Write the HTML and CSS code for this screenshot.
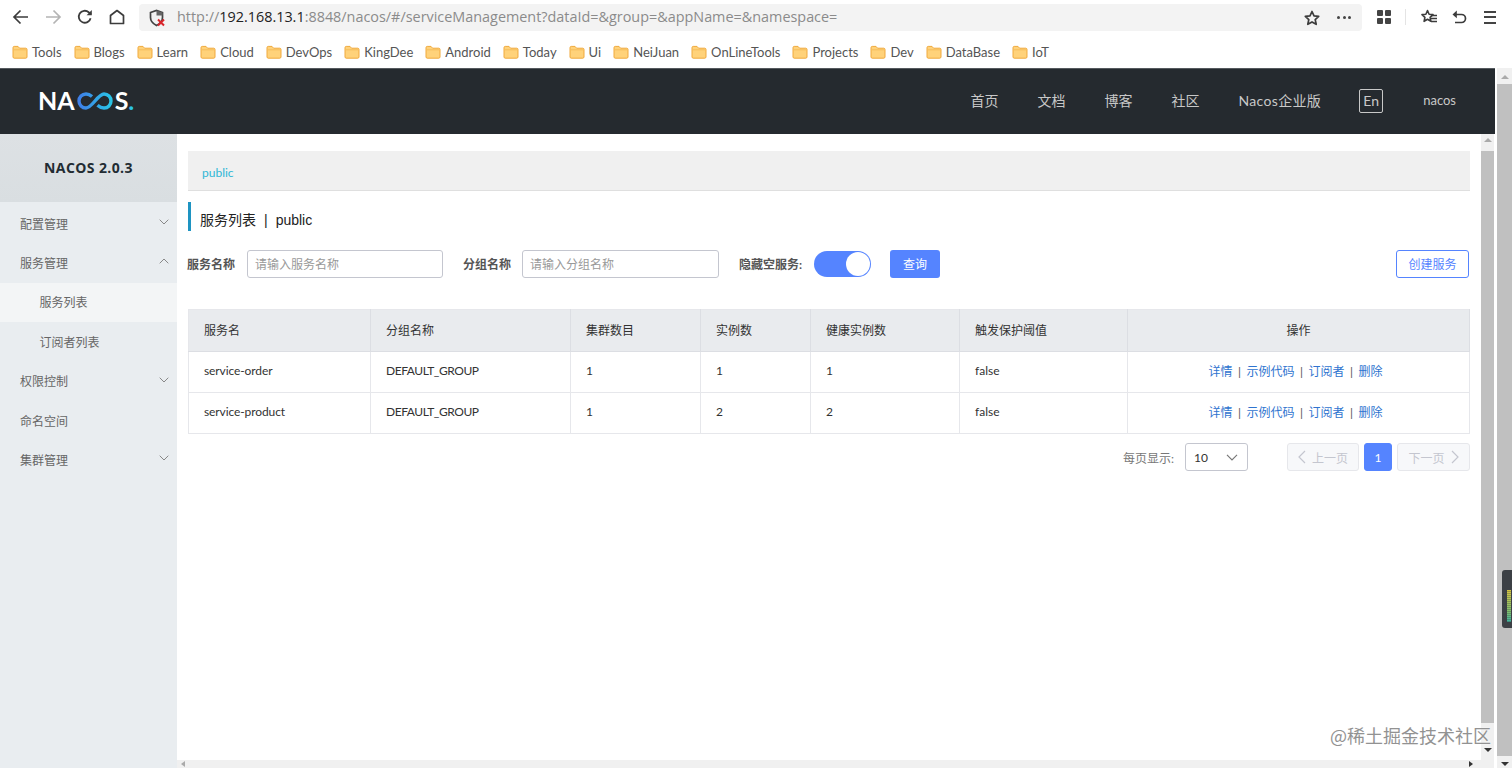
FILE: index.html
```html
<!DOCTYPE html>
<html lang="zh-CN">
<head>
<meta charset="utf-8">
<title>Nacos</title>
<link rel="stylesheet" href="styles.css">
</head>
<body>
<svg class="defs" width="0" height="0" aria-hidden="true">
  <symbol id="folder" viewBox="0 0 16 16">
    <path d="M1 13V3.6C1 2.9 1.5 2.4 2.2 2.4H6l1.6 1.8h6.2c.7 0 1.2.5 1.2 1.2V13c0 .7-.5 1.2-1.2 1.2H2.200C1.500 14.200 1 13.700 1 13Z" fill="#ffd27a" stroke="#f0a93c" stroke-width="1"/>
    <path d="M1.500 5.800H14.500" stroke="#f6bd5c" stroke-width="1"/>
  </symbol>
  <symbol id="down" viewBox="0 0 10 6"><path d="M.7.7 5 5 9.300.7" fill="none" stroke="currentColor" stroke-width="1"/></symbol>
  <symbol id="up" viewBox="0 0 10 6"><path d="M.7 5.300 5 1l4.300 4.300" fill="none" stroke="currentColor" stroke-width="1"/></symbol>
</svg>

<div class="browser">
  <div class="toolbar">
    <div class="navbtn"><svg width="18" height="18" viewBox="0 0 18 18"><path d="M16 9H2.500M8.500 2.500 2 9l6.500 6.500" fill="none" stroke="#3c3c3c" stroke-width="1.700"/></svg></div>
    <div class="navbtn"><svg width="18" height="18" viewBox="0 0 18 18"><path d="M2 9h13.500M9.500 2.500 16 9l-6.500 6.500" fill="none" stroke="#b4b4b4" stroke-width="1.700"/></svg></div>
    <div class="navbtn"><svg width="16" height="16" viewBox="0 0 16 16"><path d="M13.600 9.200A6 6 0 1 1 11.700 3.200L14 5" fill="none" stroke="#3c3c3c" stroke-width="1.800"/><path d="M14.800 1v5.200H9.600Z" fill="#3c3c3c"/></svg></div>
    <div class="navbtn"><svg width="16" height="16" viewBox="0 0 16 16"><path d="M1.500 14.500V6.500L8 1.500l6.500 5v8Z" fill="none" stroke="#3c3c3c" stroke-width="1.700" stroke-linejoin="round"/></svg></div>
    <div class="urlbar">
      <svg class="shield" width="18" height="18" viewBox="0 0 18 18"><path d="M2.500 3.500 8.500 1.500l6 2v5c0 4-3 6.500-6 8-3-1.500-6-4-6-8Z" fill="none" stroke="#444" stroke-width="1.700"/><path d="M8.500 1.500l6 2v3H8.500Z" fill="#666"/><path d="M10 10.500l6 6M16 10.500l-6 6" stroke="#d9252b" stroke-width="2"/></svg>
      <div class="url"><span class="dim">http://</span><span class="host">192.168.13.1</span><span class="dim">:8848/nacos/#/serviceManagement?dataId=&amp;group=&amp;appName=&amp;namespace=</span></div>
      <svg class="barstar" width="16" height="16" viewBox="0 0 16 16"><path d="m8 1.500 2 4.400 4.700.5-3.500 3.200 1 4.700L8 11.900l-4.200 2.400 1-4.700L1.300 6.400 6 5.900Z" fill="none" stroke="#3c3c3c" stroke-width="1.700" stroke-linejoin="round"/></svg>
      <div class="dots"><i></i><i></i><i></i></div>
    </div>
    <div class="tools">
      <div class="grid4"><i></i><i></i><i></i><i></i></div>
      <div class="tooldiv"></div>
      <svg class="favlist" width="17" height="16" viewBox="0 0 17 16"><path d="m6.500 1.500 1.600 3.700 3.900.4-2.900 2.700.8 4-3.400-2.100-3.400 2.100.8-4L1 5.600l3.900-.4Z" fill="none" stroke="#3c3c3c" stroke-width="1.600" stroke-linejoin="round"/><path d="M10 6.500h6M10 9.500h6M10 12.500h6" stroke="#3c3c3c" stroke-width="1.400"/></svg>
      <svg class="undo" width="16" height="16" viewBox="0 0 16 16"><path d="M3 5.500h7.500a4 4 0 0 1 0 8H4" fill="none" stroke="#3c3c3c" stroke-width="1.700"/><path d="M5.800 1.500 1.500 5.500l4.300 3.800Z" fill="#3c3c3c"/></svg>
      <div class="burger"><i></i><i></i><i></i></div>
    </div>
  </div>

  <div class="bookmarks">
    <div class="bm"><svg class="ico16"><use href="#folder"/></svg>Tools</div>
    <div class="bm"><svg class="ico16"><use href="#folder"/></svg>Blogs</div>
    <div class="bm"><svg class="ico16"><use href="#folder"/></svg>Learn</div>
    <div class="bm"><svg class="ico16"><use href="#folder"/></svg>Cloud</div>
    <div class="bm"><svg class="ico16"><use href="#folder"/></svg>DevOps</div>
    <div class="bm"><svg class="ico16"><use href="#folder"/></svg>KingDee</div>
    <div class="bm"><svg class="ico16"><use href="#folder"/></svg>Android</div>
    <div class="bm"><svg class="ico16"><use href="#folder"/></svg>Today</div>
    <div class="bm"><svg class="ico16"><use href="#folder"/></svg>Ui</div>
    <div class="bm"><svg class="ico16"><use href="#folder"/></svg>NeiJuan</div>
    <div class="bm"><svg class="ico16"><use href="#folder"/></svg>OnLineTools</div>
    <div class="bm"><svg class="ico16"><use href="#folder"/></svg>Projects</div>
    <div class="bm"><svg class="ico16"><use href="#folder"/></svg>Dev</div>
    <div class="bm"><svg class="ico16"><use href="#folder"/></svg>DataBase</div>
    <div class="bm"><svg class="ico16"><use href="#folder"/></svg>IoT</div>
  </div>

  <div class="viewport">
    <div class="page">
      <header class="topbar">
        <div class="logo">
          <span>NA</span><svg class="inf" width="38" height="18" viewBox="0 0 37 18"><defs><linearGradient id="lg" x1="0" x2="1"><stop offset="0" stop-color="#3f7fe8"/><stop offset="1" stop-color="#29c4e6"/></linearGradient></defs><path d="M15.500 4.500C13.500 2.800 11.500 2 9.500 2 5.500 2 2.500 5 2.500 9s3 7 7 7c6 0 12-14 18-14 4 0 7 3 7 7s-3 7-7 7c-2.500 0-4.500-1-6.500-2.800" fill="none" stroke="url(#lg)" stroke-width="3.400"/></svg><span>S</span><span class="logodot">.</span>
        </div>
        <nav class="topnav">
          <span>首页</span><span>文档</span><span>博客</span><span>社区</span><span class="ent">Nacos企业版</span>
          <span class="lang">En</span><span class="user">nacos</span>
        </nav>
      </header>
      <div class="body">
        <aside class="side">
          <div class="brand">NACOS 2.0.3</div>
          <ul class="menu">
            <li class="mi">配置管理<svg class="chev"><use href="#down"/></svg></li>
            <li class="mi">服务管理<svg class="chev"><use href="#up"/></svg></li>
            <li class="mi sub active">服务列表</li>
            <li class="mi sub">订阅者列表</li>
            <li class="mi">权限控制<svg class="chev"><use href="#down"/></svg></li>
            <li class="mi">命名空间</li>
            <li class="mi">集群管理<svg class="chev"><use href="#down"/></svg></li>
          </ul>
        </aside>
        <div class="mainwrap">
          <main class="main">
            <div class="crumb">public</div>
            <h1 class="title">服务列表<span class="sep">|</span>public</h1>
            <div class="search">
              <label class="lbl lbl1">服务名称</label>
              <div class="input input1">请输入服务名称</div>
              <label class="lbl lbl2">分组名称</label>
              <div class="input input2">请输入分组名称</div>
              <label class="lbl lbl3">隐藏空服务:</label>
              <div class="switch"><i></i></div>
              <button class="btn primary">查询</button>
              <button class="btn outline">创建服务</button>
            </div>
            <table class="tbl">
              <colgroup><col class="c1"><col class="c2"><col class="c3"><col class="c4"><col class="c5"><col class="c6"><col class="c7"></colgroup>
              <thead><tr><th>服务名</th><th>分组名称</th><th>集群数目</th><th>实例数</th><th>健康实例数</th><th>触发保护阈值</th><th class="ctr">操作</th></tr></thead>
              <tbody>
                <tr><td class="nm">service-order</td><td class="grp">DEFAULT_GROUP</td><td>1</td><td>1</td><td>1</td><td>false</td>
                  <td class="ctr ops"><a>详情</a><span class="bar">|</span><a>示例代码</a><span class="bar">|</span><a>订阅者</a><span class="bar">|</span><a>删除</a></td></tr>
                <tr><td class="nm">service-product</td><td class="grp">DEFAULT_GROUP</td><td>1</td><td>2</td><td>2</td><td>false</td>
                  <td class="ctr ops"><a>详情</a><span class="bar">|</span><a>示例代码</a><span class="bar">|</span><a>订阅者</a><span class="bar">|</span><a>删除</a></td></tr>
              </tbody>
            </table>
            <div class="pager">
              <span class="pglabel">每页显示:</span>
              <div class="select"><span>10</span><svg class="selchev"><use href="#down"/></svg></div>
              <div class="pg prev"><svg class="pgchev" viewBox="0 0 8 14"><path d="M7 1 1 7l6 6" fill="none" stroke="currentColor" stroke-width="1.200"/></svg>上一页</div>
              <div class="pg cur">1</div>
              <div class="pg next">下一页<svg class="pgchev" viewBox="0 0 8 14"><path d="m1 1 6 6-6 6" fill="none" stroke="currentColor" stroke-width="1.200"/></svg></div>
            </div>
          </main>
          <div class="hscroll">
            <span class="tri-left"></span><span class="tri-right"></span>
          </div>
        </div>
        <div class="vscroll">
          <span class="tri-up"></span>
          <div class="vthumb"></div>
          <span class="tri-down"></span>
        </div>
      </div>
    </div>
    <div class="outerscroll">
      <span class="tri-up"></span>
      <div class="othumb"></div>
      <span class="tri-down"></span>
    </div>
  </div>
  <div class="gauge"><i></i></div>
  <div class="watermark">@稀土掘金技术社区</div>
</div>
</body>
</html>
```
FILE: styles.css
```css
* { box-sizing: border-box; }
html, body { margin: 0; padding: 0; height: 100%; overflow: hidden; background: #fff; }
body { font-family: "Lato", "Noto Sans CJK SC", sans-serif; font-size: 12px; color: #333; }
.defs { position: absolute; }
ul { list-style: none; margin: 0; padding: 0; }
i { display: block; }

.browser { position: relative; width: 1512px; height: 768px; display: flex; flex-direction: column; overflow: hidden; }

/* toolbar */
.toolbar { height: 34px; flex: none; display: flex; align-items: center; padding-left: 5px; background: #fff; }
.navbtn { width: 32px; height: 32px; display: flex; align-items: center; justify-content: center; }
.urlbar { margin-left: 6px; width: 1223px; height: 27px; background: #f3f3f3; border-radius: 4px; display: flex; align-items: center; padding-left: 9px; margin-top: 1px; }
.url { margin-left: 11px; padding-bottom: 2px; font-family: "Open Sans", sans-serif; font-size: 14.400px; flex: 1; white-space: nowrap; }
.dim { color: #8b8b8b; }
.host { color: #222; }
.barstar { margin-right: 17px; }
.dots { display: flex; gap: 2.500px; margin-right: 11px; width: 14px; }
.dots i { width: 3px; height: 3px; border-radius: 50%; background: #444; }
.tools { display: flex; align-items: center; margin-left: 15px; }
.grid4 { display: grid; grid-template-columns: 6px 6px; grid-auto-rows: 6px; gap: 2px; width: 14px; }
.grid4 i { background: #444; border-radius: 1px; }
.tooldiv { width: 1px; height: 16px; background: #e4e4e4; margin: 0 15px 0 14px; }
.undo { margin-left: 13px; }
.burger { margin-left: 17px; width: 12px; display: flex; flex-direction: column; gap: 3.500px; }
.burger i { height: 2px; background: #444; }

/* bookmarks */
.bookmarks { height: 34px; flex: none; display: flex; align-items: center; gap: 12px; padding: 1px 0 0 12px; background: #fff; font-family: "Lato", sans-serif; font-size: 13px; color: #555; }
.bm { display: flex; align-items: center; gap: 4px; white-space: nowrap; }
.ico16 { width: 16px; height: 16px; flex: none; }

/* viewport */
.viewport { flex: 1; min-height: 0; display: flex; }
.page { width: 1495px; display: flex; flex-direction: column; }
.outerscroll { margin-left: 2px; width: 15px; background: #f0f0f0; display: flex; flex-direction: column; align-items: center; }
.othumb { width: 15px; height: 672px; background: #c0c0c0; margin-top: 5px; }
.outerscroll .tri-up { margin-top: 7px; }
.outerscroll .tri-down { margin-top: 6px; }
.tri-up, .tri-down, .tri-left, .tri-right { display: block; width: 0; height: 0; flex: none; }
.tri-up { border: 4px solid transparent; border-top: 0; border-bottom: 4px solid #aaa; }
.tri-down { border: 4px solid transparent; border-bottom: 0; border-top: 4px solid #333; }
.tri-left { border: 3px solid transparent; border-left: 0; border-right: 4px solid #aaa; }
.tri-right { border: 3px solid transparent; border-right: 0; border-left: 4px solid #333; }

/* header */
.topbar { height: 66px; flex: none; background: #252a2f; display: flex; align-items: center; padding: 0 39px 0 38px; border-top: 1px solid #555a5e; }
.logo { display: flex; align-items: center; color: #fff; font-family: "Lato", sans-serif; font-weight: 700; font-size: 25px; line-height: 25px; margin-top: -2px; }
.logodot { color: #2cc4e4; }
.inf { margin: 0 1px 0 1px; }
.topnav { margin-left: auto; display: flex; align-items: center; gap: 39px; color: #c8c8c8; font-size: 14px; font-family: "Lato", "Noto Sans CJK SC", sans-serif; padding-bottom: 2px; }
.topnav span { padding-bottom: 2px; }
.topnav .lang { width: 24px; height: 24px; padding: 0; border: 1px solid #c8c8c8; border-radius: 2px; display: flex; align-items: center; justify-content: center; margin: 0 1px 0 -1px; }
.ent { letter-spacing: .35px; }
.topnav .user { font-size: 13px; }

/* body */
.body { flex: 1; min-height: 0; display: flex; }
.side { width: 177px; flex: none; background: #e9edf0; }
.brand { height: 68px; padding-bottom: 2px; background: linear-gradient(#dde1e4, #d9dee1); display: flex; align-items: center; justify-content: center; font-family: "Open Sans", sans-serif; font-weight: 700; font-size: 14px; letter-spacing: .4px; color: #222c33; }
.menu { padding-top: 2px; }
.mi { height: 39.400px; display: flex; align-items: center; padding: 0 0 1px 20px; color: #666; position: relative; }
.mi.sub { padding-left: 39.500px; }
.mi.active { background: #f3f5f6; }
.chev { position: absolute; left: 159px; top: 15px; width: 10px; height: 6px; color: #888; }

.mainwrap { flex: 1; min-width: 0; display: flex; flex-direction: column; }
.main { flex: 1; min-height: 0; padding: 17px 11px 0 10px; background: #fff; overflow: hidden; }
.crumb { margin-left: 1px; height: 40px; background: #f0f0f0; border-bottom: 1px solid #dfdfdf; padding: 14px 0 0 14px; line-height: 16px; color: #2fb7d6; }
.title { margin: 11px 0 0 1px; height: 29px; border-left: 3px solid #1e94c2; padding-left: 9px; font-weight: 400; font-size: 14px; line-height: 36px; color: #222; font-family: "Liberation Sans", "Noto Sans CJK SC", sans-serif; }
.sep { margin: 0 8px; }

.search { margin-top: 19px; height: 28px; display: flex; align-items: center; }
.lbl { font-weight: 700; color: #555; white-space: nowrap; padding-bottom: 2px; }
.lbl1 { width: 60px; }
.input { height: 28px; border: 1px solid #c4c6cf; border-radius: 3px; padding-left: 7px; line-height: 28px; color: #999; background: #fff; }
.input1 { width: 196px; }
.lbl2 { margin-left: 20px; width: 59px; }
.input2 { width: 197px; }
.lbl3 { margin-left: 20px; width: 75px; }
.switch { width: 57px; height: 26px; border-radius: 13px; background: #5584ff; position: relative; }
.switch i { position: absolute; right: 1px; top: 1px; width: 24px; height: 24px; border-radius: 50%; background: #fff; }
.btn { height: 28px; border-radius: 3px; font: inherit; font-size: 12px; padding: 0 0 1px; }
.primary { margin-left: 19px; width: 50px; background: #5584ff; color: #fff; border: 0; }
.outline { margin-left: auto; width: 73px; margin-right: 1px; background: #fff; color: #5584ff; border: 1px solid #5584ff; }

.tbl { margin: 31px 0 0 1px; width: 1281px; border-collapse: collapse; table-layout: fixed; color: #333; border: 1px solid #e6e7eb; }
.c1 { width: 182px; } .c2 { width: 200px; } .c3 { width: 130px; } .c4 { width: 110px; } .c5 { width: 149px; } .c6 { width: 168px; } .c7 { width: 342px; }
.tbl th { height: 42px; background: #e9ebee; font-weight: 400; text-align: left; padding: 0 0 3px 15px; border: 1px solid #dcdee3; border-width: 0 1px 1px 0; }
.tbl td { height: 41px; padding: 0 0 3px 15px; border: 1px solid #e6e7eb; }
.tbl .ctr { text-align: center; padding-left: 0; }
.tbl .ops { padding-right: 6px; }
.tbl a { color: #2f74cf; }
.tbl .grp { letter-spacing: -.45px; }
.tbl .nm { letter-spacing: -.1px; }
.bar { margin: 0 5.500px; color: #555; }

.pager { margin-top: 9px; display: flex; align-items: center; justify-content: flex-end; height: 28px; }
.pglabel { color: #777; margin-right: 11px; }
.select { width: 63px; height: 28px; border: 1px solid #c4c6cf; border-radius: 3px; display: flex; align-items: center; justify-content: space-between; padding: 0 9px 0 8px; color: #333; }
.selchev { width: 12px; height: 7px; color: #777; }
.pg { height: 28px; border-radius: 3px; display: flex; align-items: center; justify-content: center; gap: 6px; color: #c4c6cf; background: #f7f8fa; border: 1px solid #e6e7eb; white-space: nowrap; }
.prev { width: 72px; margin-left: 39px; }
.next { width: 73px; margin-left: 5px; }
.cur { width: 28px; margin-left: 5px; background: #5584ff; border-color: #5584ff; color: #fff; }
.pgchev { width: 8px; height: 14px; }

.hscroll { height: 8px; flex: none; background: #f0f0f0; display: flex; align-items: center; justify-content: space-between; padding: 0 8px 0 4px; }
.vscroll { width: 13px; margin-right: 1px; flex: none; display: flex; flex-direction: column; align-items: center; background: #f0f0f0; padding-bottom: 8px; }
.vthumb { width: 13px; height: 572px; margin-top: 9px; background: #c0c0c0; }
.vscroll .tri-up { margin-top: 4px; }
.vscroll .tri-down { margin-top: 25px; }

/* overlays */
.gauge { position: absolute; left: 1502px; top: 570px; width: 10px; height: 58px; background: #3c4045; border-radius: 3px 0 0 3px; }
.gauge i { width: 4px; height: 32px; margin: 20px 0 0 5px; background: repeating-linear-gradient(transparent 0 1px, rgba(60,64,69,.35) 1px 2px), linear-gradient(#d8c640, #7cc070 70%, #3bb4a0); }
.watermark { position: absolute; left: 1330px; top: 723px; font-size: 18px; line-height: 24px; white-space: nowrap; color: #929292; font-family: "Noto Sans CJK SC", sans-serif; text-shadow: 0 0 2px #fff; }
```
